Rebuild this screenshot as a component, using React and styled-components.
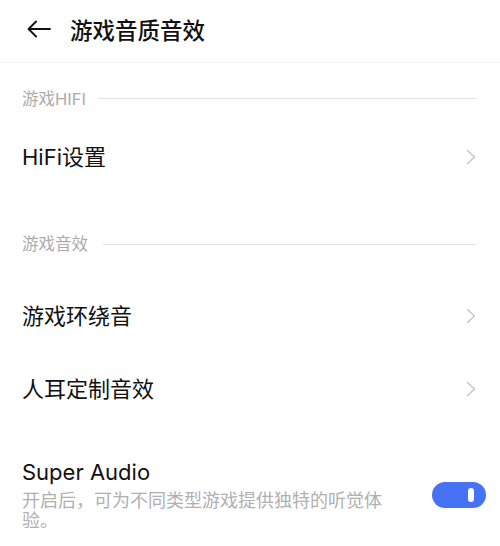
import React from "react";
import styled, { createGlobalStyle } from "styled-components";

const Global = createGlobalStyle`
  html, body { margin: 0; padding: 0; background: #fff; }
  body { font-family: Inter, "Noto Sans CJK SC", sans-serif; color: #111; }
  * { box-sizing: border-box; }
`;

const Page = styled.div`
  width: 500px;
  height: 546px;
  overflow: hidden;
  background: #fff;
  display: flex;
  flex-direction: column;
`;

const Header = styled.header`
  height: 63px;
  flex: none;
  display: flex;
  align-items: center;
  padding: 0 0 4px 27px;
  border-bottom: 1px solid #f4f4f4;
`;

const BackButton = styled.button`
  border: 0;
  background: none;
  padding: 0;
  width: 24px;
  height: 18px;
  display: flex;
  align-items: center;
  justify-content: center;
  color: #111;
`;

const Title = styled.h1`
  margin: 0 0 0 19px;
  font-family: "Noto Sans CJK SC", sans-serif;
  font-size: 22.5px;
  font-weight: 500;
  line-height: 30px;
  color: #111;
`;

const SectionHeader = styled.div`
  display: flex;
  align-items: center;
  gap: ${(p) => p.$gap}px;
  height: 20px;
  margin-top: ${(p) => p.$mt}px;
  padding: 0 23px 0 22px;
  flex: none;
`;

const SectionLabel = styled.span`
  font-size: 16.5px;
  line-height: 20px;
  color: #ababab;
  white-space: nowrap;
`;

const SectionLine = styled.div`
  flex: 1;
  height: 1px;
  background: #e2e2e2;
  margin-top: ${(p) => p.$dy || 0}px;
`;

const Row = styled.div`
  display: flex;
  align-items: center;
  justify-content: space-between;
  height: ${(p) => p.$h}px;
  margin-top: ${(p) => p.$mt || 0}px;
  padding: 0 24px 0 22px;
  flex: none;
`;

const RowLabel = styled.span`
  font-size: 22px;
  line-height: 28px;
  color: #111;
`;

const ToggleRow = styled.div`
  display: flex;
  align-items: center;
  justify-content: space-between;
  margin-top: ${(p) => p.$mt}px;
  padding: 0 14px 0 22px;
`;

const TextBlock = styled.div`
  display: flex;
  flex-direction: column;
  gap: 3px;
`;

const Description = styled.p`
  margin: 0;
  max-width: 368px;
  font-family: "Noto Sans CJK SC", sans-serif;
  font-size: 18px;
  line-height: 20px;
  color: #b0b0b0;
`;

const Toggle = styled.div`
  width: 54px;
  height: 26px;
  border-radius: 13px;
  background: ${(p) => (p.$on ? "#4573f3" : "#d8d8d8")};
  display: flex;
  align-items: center;
  justify-content: ${(p) => (p.$on ? "flex-end" : "flex-start")};
  padding: 0 12px;
  flex: none;
  margin-top: 2px;
`;

const Thumb = styled.span`
  width: 6px;
  height: 14px;
  border-radius: 3px;
  background: #fff;
`;

const Chevron = () => (
  <svg width="10" height="16" viewBox="0 0 10 16" fill="none">
    <path d="M1.5 1.5 L8.5 8 L1.5 14.5" stroke="#c4c4c4" strokeWidth="1.4" strokeLinecap="round" strokeLinejoin="round" />
  </svg>
);

const BackArrow = () => (
  <svg width="25" height="18" viewBox="0 0 25 18" fill="none">
    <path d="M24 9 H2 M9.5 1.2 L1.6 9 L9.5 16.8" stroke="#111" strokeWidth="1.9" strokeLinecap="round" strokeLinejoin="round" />
  </svg>
);

export default function App() {
  return (
    <>
      <Global />
      <Page>
        <Header>
          <BackButton aria-label="返回">
            <BackArrow />
          </BackButton>
          <Title>游戏音质音效</Title>
        </Header>

        <SectionHeader $mt={26} $gap={12}>
          <SectionLabel>游戏HIFI</SectionLabel>
          <SectionLine $dy={-1} />
        </SectionHeader>
        <Row $h={60} $mt={18}>
          <RowLabel>HiFi设置</RowLabel>
          <Chevron />
        </Row>

        <SectionHeader $mt={47} $gap={15}>
          <SectionLabel>游戏音效</SectionLabel>
          <SectionLine />
        </SectionHeader>
        <Row $h={72} $mt={26}>
          <RowLabel>游戏环绕音</RowLabel>
          <Chevron />
        </Row>
        <Row $h={73}>
          <RowLabel>人耳定制音效</RowLabel>
          <Chevron />
        </Row>

        <ToggleRow $mt={33}>
          <TextBlock>
            <RowLabel>Super Audio</RowLabel>
            <Description>开启后，可为不同类型游戏提供独特的听觉体验。</Description>
          </TextBlock>
          <Toggle $on>
            <Thumb />
          </Toggle>
        </ToggleRow>
      </Page>
    </>
  );
}
